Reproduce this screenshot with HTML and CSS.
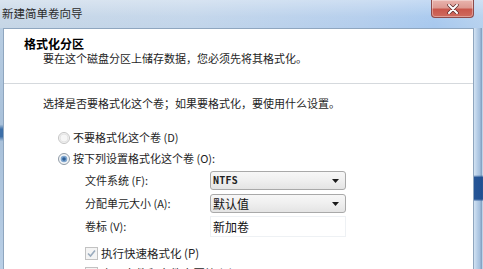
FILE: index.html
```html
<!DOCTYPE html>
<html lang="zh-CN">
<head>
<meta charset="utf-8">
<title>新建简单卷向导</title>
<link rel="stylesheet" href="styles.css">
</head>
<body>
<div class="window">
  <div class="titlebar">
    <span class="title">新建简单卷向导</span>
    <div class="close">
      <svg width="14" height="10" viewBox="0 0 14 10"><path d="M3 1 L11 9 M11 1 L3 9" stroke="#5a2a2a" stroke-width="3.4" stroke-linecap="round"/><path d="M3 1 L11 9 M11 1 L3 9" stroke="#ffffff" stroke-width="2" stroke-linecap="round"/></svg>
    </div>
  </div>
  <div class="frame">
    <div class="edge-left"></div>
    <div class="panel">
      <div class="header">
        <div class="heading">格式化分区</div>
        <div class="sub">要在这个磁盘分区上储存数据，您必须先将其格式化。</div>
      </div>
      <div class="body">
        <p class="intro">选择是否要格式化这个卷；如果要格式化，要使用什么设置。</p>
        <div class="radio-row">
          <svg class="radio" width="12" height="12" viewBox="0 0 12 12"><circle cx="6" cy="6" r="5.5" fill="#f6f6f6" stroke="#c4c4c4"/><circle cx="6" cy="6" r="4" fill="none" stroke="#e4e4e4"/></svg>
          <span>不要格式化这个卷 (D)</span>
        </div>
        <div class="radio-row">
          <svg class="radio" width="12" height="12" viewBox="0 0 12 12"><circle cx="6" cy="6" r="5.5" fill="#f2f4f6" stroke="#8f9aa6"/><circle cx="6" cy="6" r="3.3" fill="#7fa6cf"/><circle cx="6" cy="6" r="1.8" fill="#2f5f96"/></svg>
          <span>按下列设置格式化这个卷 (O):</span>
        </div>
        <div class="form">
          <span class="label">文件系统 (F):</span>
          <div class="combo"><span class="mono">NTFS</span><svg class="arrow" width="7" height="4" viewBox="0 0 7 4"><path d="M0 0 H7 L3.5 4 Z" fill="#1a1a1a"/></svg></div>
          <span class="label">分配单元大小 (A):</span>
          <div class="combo"><span class="value">默认值</span><svg class="arrow" width="7" height="4" viewBox="0 0 7 4"><path d="M0 0 H7 L3.5 4 Z" fill="#1a1a1a"/></svg></div>
          <span class="label">卷标 (V):</span>
          <div class="textbox"><span class="value">新加卷</span></div>
        </div>
        <div class="checks">
          <div class="check-row">
            <svg class="check" width="13" height="13" viewBox="0 0 13 13"><rect x="0.5" y="0.5" width="12" height="12" fill="#f4f4f4" stroke="#c2c2c2"/><path d="M3 6.5 L5.5 9 L10 3.5" fill="none" stroke="#9aabbd" stroke-width="1.6"/></svg>
            <span>执行快速格式化 (P)</span>
          </div>
          <div class="check-row">
            <svg class="check" width="13" height="13" viewBox="0 0 13 13"><rect x="0.5" y="0.5" width="12" height="12" fill="#f4f4f4" stroke="#c2c2c2"/></svg>
            <span>启用文件和文件夹压缩 (E)</span>
          </div>
        </div>
      </div>
    </div>
    <div class="edge-right"></div>
  </div>
</div>
</body>
</html>
```

FILE: styles.css
```css
html, body {
  margin: 0;
  padding: 0;
}
body {
  width: 483px;
  height: 269px;
  overflow: hidden;
  font-family: "Noto Sans CJK SC", "Noto Sans", sans-serif;
  font-size: 11px;
  color: #1e1e1e;
  background: #b9d0e8;
}
.window {
  display: flex;
  flex-direction: column;
  width: 483px;
  height: 269px;
}
.titlebar {
  height: 28px;
  flex: none;
  display: flex;
  justify-content: space-between;
  align-items: flex-start;
  background:
    linear-gradient(180deg, rgba(255,255,255,0.35) 0%, rgba(255,255,255,0.05) 60%, rgba(255,255,255,0) 100%),
    linear-gradient(90deg, #c6d6e6 0%, #c2d5ea 40%, #b3cdec 75%, #a7c8ee 90%, #b6d1ee 100%);
}
.title {
  font-size: 11.5px;
  line-height: 15px;
  margin: 6px 0 0 2px;
  color: #2b2b2b;
}
.close {
  width: 41px;
  height: 17px;
  margin: 0 9px 0 0;
  border: 1px solid #8d4a4a;
  border-top: none;
  border-radius: 0 0 4px 4px;
  background: linear-gradient(180deg, #e9b4ae 0%, #dd9a92 45%, #c9574c 55%, #cf6b5e 100%);
  display: flex;
  align-items: center;
  justify-content: center;
  box-shadow: inset 0 0 0 1px rgba(255,255,255,0.35);
}
.frame {
  flex: 1;
  display: flex;
  min-height: 0;
}
.edge-left {
  width: 3px;
  flex: none;
  background: linear-gradient(180deg, #b8cde2 0%, #a9c1da 40%, #3d6fa8 42%, #3d6fa8 45%, #a9c1da 47%, #b9cfe6 100%);
}
.edge-right {
  width: 9px;
  flex: none;
  background:
    linear-gradient(180deg, rgba(0,0,0,0) 0%, rgba(0,0,0,0) 61%, rgba(20,70,140,0.9) 62%, rgba(20,70,140,0.9) 71%, rgba(0,0,0,0) 72%),
    linear-gradient(90deg, #d2e2f2 0%, #b4cce6 40%, #a2bedc 70%, #6f8fb2 80%, #b7cde5 90%, #c7d9ec 100%);
}
.panel {
  flex: 1;
  background: #ffffff;
  border: 1px solid #8fa6bf;
  border-bottom: none;
  display: flex;
  flex-direction: column;
}
.header {
  padding: 7px 0 17px 20px;
  border-bottom: 1px solid #d5d9dd;
  box-shadow: 0 1px 0 #ffffff;
}
.heading {
  font-size: 12px;
  font-weight: bold;
  line-height: 15px;
  color: #000000;
}
.sub {
  line-height: 15px;
  margin-left: 19px;
}
.body {
  padding: 12px 0 0 39px;
}
.intro {
  margin: 0 0 16px 0;
  line-height: 15px;
}
.radio-row {
  display: flex;
  align-items: center;
  gap: 3px;
  height: 21px;
  margin-left: 15px;
  line-height: 15px;
}
.radio {
  flex: none;
}
.form {
  display: grid;
  grid-template-columns: 125px 136px;
  grid-auto-rows: 21px;
  row-gap: 2px;
  margin: 1px 0 0 42px;
  align-items: center;
}
.label {
  line-height: 15px;
}
.combo {
  height: 19px;
  box-sizing: border-box;
  border: 1px solid #a9a9a9;
  border-radius: 3px;
  background: linear-gradient(180deg, #f7f7f7 0%, #efefef 50%, #e4e4e4 100%);
  display: flex;
  align-items: center;
  justify-content: space-between;
  padding: 0 6px 0 2px;
}
.textbox {
  height: 21px;
  box-sizing: border-box;
  border: 1px solid #eef1f4;
  display: flex;
  align-items: center;
  padding: 0 2px;
}
.mono {
  font-family: "DejaVu Sans Mono", "Liberation Mono", monospace;
  font-size: 10px;
  font-weight: bold;
  color: #222222;
  letter-spacing: 0.2px;
}
.value {
  font-size: 12px;
  line-height: 15px;
  color: #111111;
}
.arrow {
  flex: none;
}
.checks {
  margin: 6px 0 0 42px;
}
.check-row {
  display: flex;
  align-items: center;
  gap: 3px;
  height: 20px;
  line-height: 15px;
  font-size: 11.5px;
}
.check {
  flex: none;
}
```
